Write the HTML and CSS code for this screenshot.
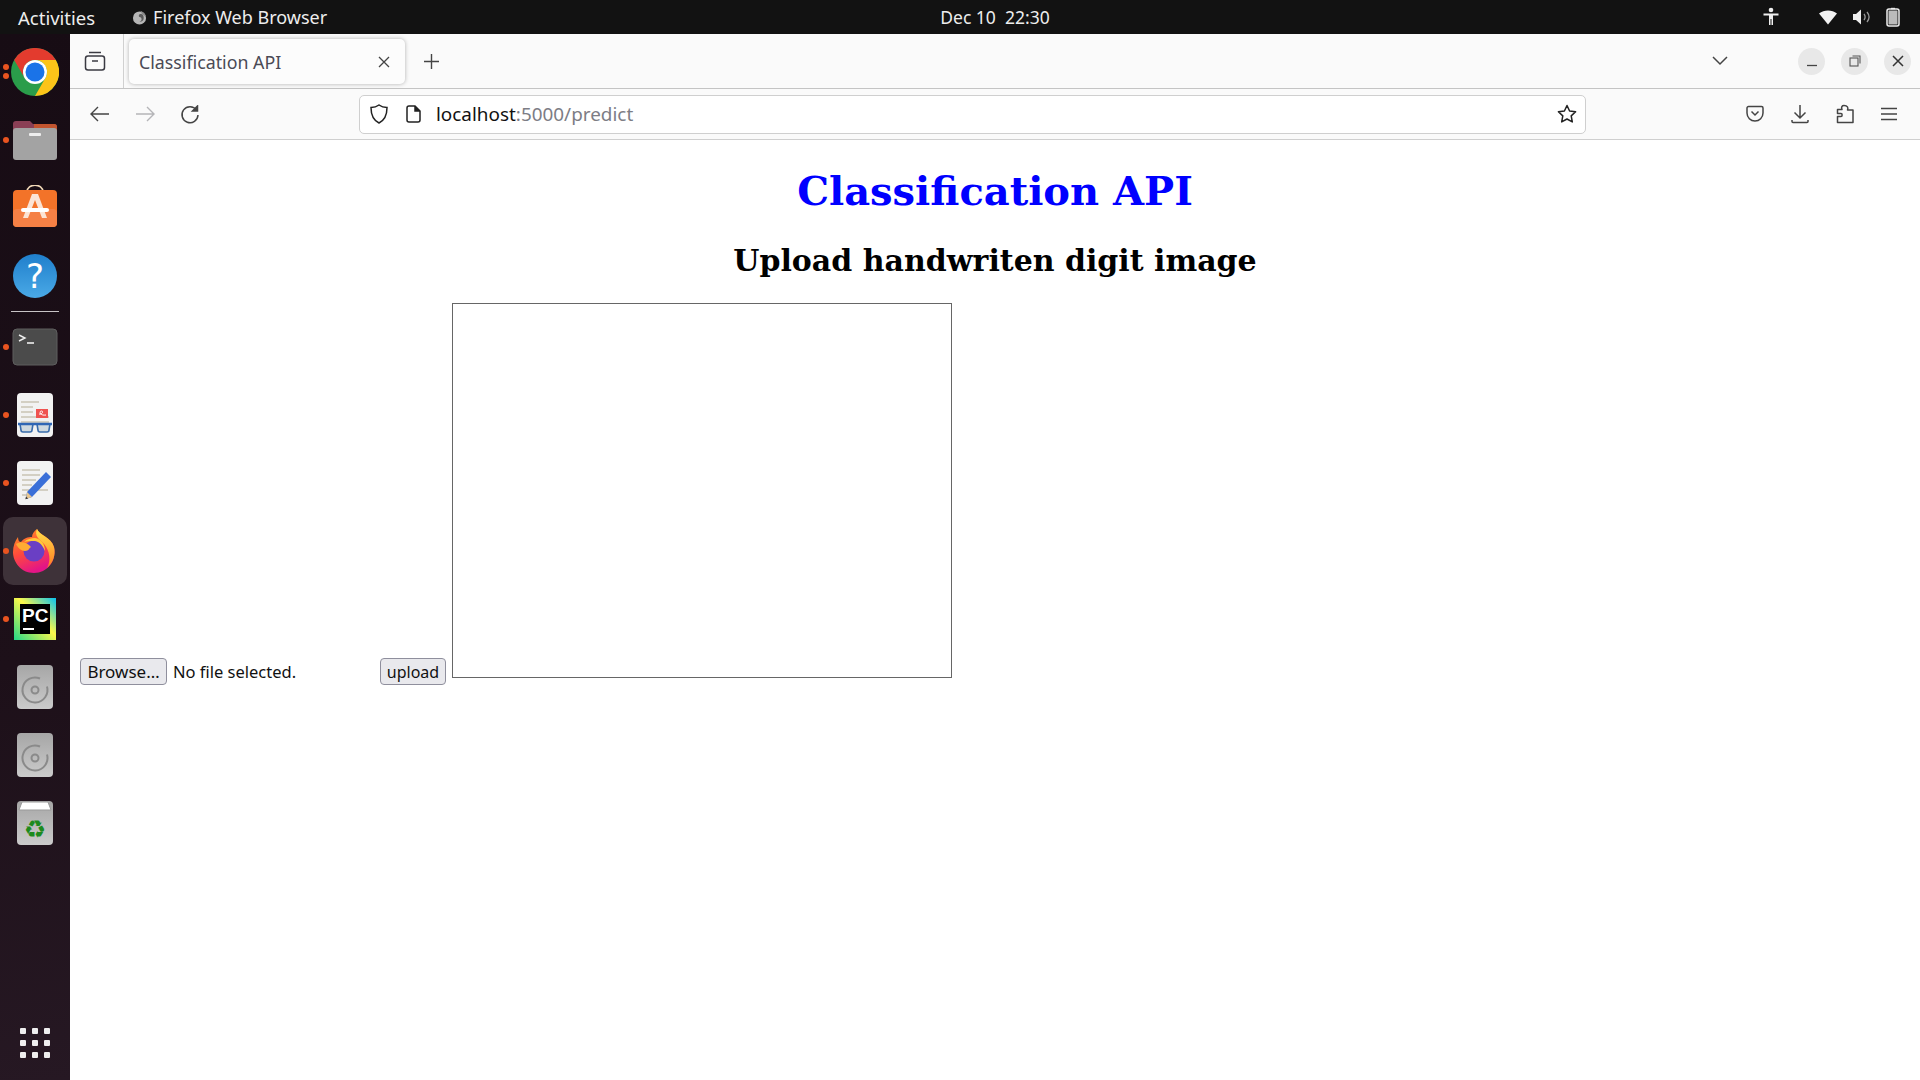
FILE: index.html

```html
<!DOCTYPE html>
<html lang="en">
<head>
  <meta charset="UTF-8">
  <title>Classification API</title>
  <link rel="stylesheet" href="styles.css">
</head>
<body>
  <!-- gnome top bar -->
  <div class="topbar">
    <span class="activities">Activities</span>
    <div class="app-menu">
      <svg width="15" height="15" viewBox="0 0 16 16"><circle cx="8" cy="8.500" r="7" fill="#b5b5b5"/><path d="M8 4.500c3-1 4.500 1 4.500 4S10 13 8 12.500C11 12 11 8 8 7.500 7 7 7 5.500 8 4.500z" fill="#5a5a5a"/><path d="M9 .8c3 1 5 3 6 6L11 5z" fill="#8a8a8a"/></svg>
      <span>Firefox Web Browser</span>
    </div>
    <span class="clock">Dec 10&nbsp;&nbsp;22:30</span>
    <div class="tray">
      <svg class="tray-a11y" width="18" height="20" viewBox="0 0 18 20"><circle cx="9" cy="3" r="2.300" fill="#eee"/><path d="M1.500 6.500h15v2H11V18H9.500v-6h-1v6H7V8.500H1.500z" fill="#eee"/></svg>
      <svg class="tray-wifi" width="20" height="16" viewBox="0 0 20 16"><path d="M1 4.500C6 .5 14 .5 19 4.500L10 15.500z" fill="#f2f2f2"/></svg>
      <svg class="tray-vol" width="20" height="18" viewBox="0 0 20 18"><path d="M1 6h3l5-4.500v15L4 12H1z" fill="#eee"/><path d="M12 6c1.500 2 1.500 4 0 6M15 4c2.500 3 2.500 7 0 10" fill="none" stroke="#999" stroke-width="1.300"/></svg>
      <svg width="14" height="20" viewBox="0 0 14 20"><path d="M5 .8h4v1.500H5z" fill="#ddd"/><rect x="1" y="2" width="12" height="17" rx="2" fill="none" stroke="#eee" stroke-width="1.500"/><rect x="2.500" y="3.500" width="9" height="14" fill="#bbb"/></svg>
    </div>
  </div>

  <div class="desktop">
    <!-- dock -->
    <nav class="dock">
      <div class="slot">
        <i class="dot dot-a"></i><i class="dot dot-b"></i>
        <svg width="48" height="48" viewBox="0 0 48 48"><circle cx="24" cy="24" r="24" fill="#2a9d4a"/><path d="M3.200 12A24 24 0 0 1 44.800 12H24A12 12 0 0 0 13.600 30z" fill="#e33b2e"/><path d="M44.800 12A24 24 0 0 1 24 48L34.400 30A12 12 0 0 0 24 12z" fill="#fcc419"/><circle cx="24" cy="24" r="12" fill="#fff"/><circle cx="24" cy="24" r="9.500" fill="#1a73e8"/></svg>
      </div>
      <div class="slot">
        <i class="dot"></i>
        <svg width="46" height="42" viewBox="0 0 46 42"><path d="M1 9V5a3 3 0 0 1 3-3h14l3 3h21a3 3 0 0 1 3 3v8H1z" fill="#8a3f55"/><path d="M22 5h20a3 3 0 0 1 3 3v8H22z" fill="#c2552f"/><rect x="1" y="9" width="44" height="32" rx="3" fill="#a3a3a3"/><rect x="17" y="14" width="12" height="3" rx="1" fill="#eee"/></svg>
      </div>
      <div class="slot">
        <svg width="46" height="46" viewBox="0 3 46 46"><path d="M15 10C15 1 31 1 31 10" fill="none" stroke="#f1d9b8" stroke-width="1.600"/><rect x="1" y="8" width="44" height="37" rx="4" fill="#f37329"/><rect x="1" y="27" width="44" height="18" rx="4" fill="#f58045"/><path d="M20 12h6l9 24h-5l-7-18-7 18h-5z" fill="#fbe4d5"/><rect x="9" y="26" width="28" height="4" rx="2" fill="#fff"/></svg>
      </div>
      <div class="slot">
        <svg width="46" height="46" viewBox="0 0 46 46"><defs><linearGradient id="helpBg" x1="0" y1="0" x2="0" y2="1"><stop offset="0" stop-color="#1f7fcc"/><stop offset="1" stop-color="#4aa9e6"/></linearGradient></defs><circle cx="23" cy="23" r="22" fill="url(#helpBg)"/><text x="23" y="35" class="help-mark">?</text></svg>
      </div>
      <hr class="dock-sep">
      <div class="slot">
        <i class="dot"></i>
        <svg width="46" height="38" viewBox="0 0 46 38"><rect x="1" y="1" width="44" height="36" rx="4" fill="#4b4b4b" stroke="#5e5e5e"/><path d="M7 7l6 3-6 3" fill="none" stroke="#eee" stroke-width="1.400"/><path d="M15 15h7" stroke="#eee" stroke-width="1.600"/></svg>
      </div>
      <div class="slot">
        <i class="dot"></i>
        <svg width="36" height="44" viewBox="0 0 36 44"><rect width="36" height="44" rx="4" fill="#f2f2f2"/><path d="M4 9h18M4 14h12M4 19h12M4 24h28M4 29h28" stroke="#c9c4b4" stroke-width="1.600"/><rect x="19" y="16" width="12" height="9" fill="#ef5350"/><path d="M22 21c3 1 5-3 2.500-3s-2 5 4.500 4" fill="none" stroke="#fff"/><path d="M3 31h13l-1 6a2 2 0 0 1-2 2H6a2 2 0 0 1-2-2zM20 31h13l-1 6a2 2 0 0 1-2 2h-7a2 2 0 0 1-2-2z" fill="#cfd9df" stroke="#3a6cab" stroke-width="1.600"/><path d="M1 31h34" stroke="#2f66b5" stroke-width="2.600"/></svg>
      </div>
      <div class="slot">
        <i class="dot"></i>
        <svg width="36" height="44" viewBox="0 0 36 44"><rect width="36" height="44" rx="4" fill="#f2f2f2"/><path d="M5 9h18M5 14h18M5 19h14M5 24h10M5 29h26M5 34h8" stroke="#c9c4b4" stroke-width="1.600"/><path d="M29 11l5 5-19 20-6 2 1-7z" fill="#3a6fd8"/><path d="M10 31l5 5-6 2z" fill="#e8c68f"/><path d="M9 35.500l-.7 2.800 2.800-.9z" fill="#333"/></svg>
      </div>
      <div class="slot slot-active">
        <i class="dot"></i>
        <svg width="44" height="44" viewBox="0 0 44 44"><defs><linearGradient id="foxBody" x1="0" y1="0" x2=".4" y2="1"><stop offset="0" stop-color="#ff9a1f"/><stop offset=".55" stop-color="#ff4a3d"/><stop offset="1" stop-color="#e31587"/></linearGradient><linearGradient id="foxTop" x1="0" y1="0" x2="0" y2="1"><stop offset="0" stop-color="#ffe14a"/><stop offset="1" stop-color="#ff7a22"/></linearGradient></defs><path d="M24 0C26 6 38 8 41 18 44 32 34 44 21 44 8 44 0 33 0 23 0 17 2 12 5 8 5 11 6 13 8 13 11 9 15 8 19 8 19 5 21 2 24 0z" fill="url(#foxBody)"/><path d="M24 0C26 6 38 8 41 18 43 26 40 34 34 39 38 32 37 22 31 15 26 10 21 7 24 0z" fill="url(#foxTop)"/><circle cx="21" cy="22" r="10.500" fill="#6a3fc4"/><path d="M22 9c6 1 10 6 10 13-2-5-5-9-10-10-5 0-8 0-11 1 3-3 7-4 11-4z" fill="#ffc93a"/><path d="M3 15c5-3 11-2 15 3-2 1-2 4-6 4-4 0-7-3-9-7z" fill="#ffab33"/></svg>
      </div>
      <div class="slot">
        <i class="dot"></i>
        <svg width="42" height="42" viewBox="0 0 42 42"><defs><linearGradient id="pcBg" x1="0" y1="1" x2="1" y2="0"><stop offset="0" stop-color="#21d789"/><stop offset=".55" stop-color="#fcf84a"/><stop offset="1" stop-color="#07c3f2"/></linearGradient></defs><rect width="42" height="42" fill="url(#pcBg)"/><rect x="6" y="6" width="30" height="30" fill="#000"/><text x="8" y="24" class="pc-mark">PC</text><rect x="9" y="30" width="11" height="2" fill="#fff"/></svg>
      </div>
      <div class="slot">
        <svg width="36" height="44" viewBox="0 0 36 44"><defs><linearGradient id="diskBg" x1="0" y1="0" x2="0" y2="1"><stop offset="0" stop-color="#a6a6a6"/><stop offset="1" stop-color="#cbcbcb"/></linearGradient></defs><rect width="36" height="44" rx="4" fill="url(#diskBg)"/><path d="M23 13.500a12.500 12.500 0 1 0 7 8" fill="none" stroke="#8a8a8a" stroke-width="2"/><circle cx="18" cy="25" r="3.500" fill="none" stroke="#8a8a8a" stroke-width="2"/></svg>
      </div>
      <div class="slot">
        <svg width="36" height="44" viewBox="0 0 36 44"><rect width="36" height="44" rx="4" fill="url(#diskBg)"/><path d="M23 13.500a12.500 12.500 0 1 0 7 8" fill="none" stroke="#8a8a8a" stroke-width="2"/><circle cx="18" cy="25" r="3.500" fill="none" stroke="#8a8a8a" stroke-width="2"/></svg>
      </div>
      <div class="slot">
        <svg width="36" height="44" viewBox="0 0 36 44"><rect width="36" height="44" rx="4" fill="url(#diskBg)"/><path d="M5 1h26l3 8H2z" fill="#fff" stroke="#999"/><text x="18" y="37" class="recycle-mark">♻</text></svg>
      </div>
      <div class="show-apps">
        <i></i><i></i><i></i><i></i><i></i><i></i><i></i><i></i><i></i>
      </div>
    </nav>

    <div class="browser">
      <div class="tabbar">
        <svg class="view-btn" width="22" height="22" viewBox="0 0 22 22" fill="none" stroke="#3a3a42" stroke-width="1.500"><path d="M5 2.500h12"/><rect x="1.500" y="6" width="19" height="14" rx="2.500"/><path d="M8 11h6"/></svg>
        <div class="tab-sep"></div>
        <div class="tab">
          <span class="tab-title">Classification API</span>
          <svg width="12" height="12" viewBox="0 0 12 12" stroke="#444" stroke-width="1.300"><path d="M1 1l10 10M11 1L1 11"/></svg>
        </div>
        <svg class="new-tab" width="15" height="15" viewBox="0 0 15 15" stroke="#444" stroke-width="1.400"><path d="M7.500 0v15M0 7.500h15"/></svg>
        <svg class="tab-list" width="16" height="10" viewBox="0 0 16 10" fill="none" stroke="#444" stroke-width="1.500"><path d="M1 1l7 7 7-7"/></svg>
        <div class="win-btn"><svg width="12" height="12" viewBox="0 0 12 12" stroke="#444" stroke-width="1.300"><path d="M1 10.500h10"/></svg></div>
        <div class="win-btn"><svg width="12" height="12" viewBox="0 0 12 12" fill="none" stroke="#555" stroke-width="1.100"><rect x="1" y="3" width="8" height="8"/><path d="M3.500 1h7.500v7.500"/></svg></div>
        <div class="win-btn"><svg width="12" height="12" viewBox="0 0 12 12" stroke="#333" stroke-width="1.500"><path d="M1 1l10 10M11 1L1 11"/></svg></div>
      </div>

      <div class="navbar">
        <svg width="20" height="16" viewBox="0 0 20 16" fill="none" stroke="#444" stroke-width="1.400"><path d="M19 8H1M8 1L1 8l7 7"/></svg>
        <svg width="20" height="16" viewBox="0 0 20 16" fill="none" stroke="#b5b5b8" stroke-width="1.400"><path d="M1 8h18M12 1l7 7-7 7"/></svg>
        <svg class="reload" width="20" height="20" viewBox="0 0 20 20" fill="none" stroke="#444" stroke-width="1.500"><path d="M16.500 5A8 8 0 1 0 18 10"/><path d="M17.500 1v5h-5z" fill="#444"/></svg>
        <div class="urlbar">
          <svg width="18" height="20" viewBox="0 0 18 20" fill="none" stroke="#222" stroke-width="1.500"><path d="M9 1c2 1.500 5 2.500 8 2.500 0 8-2 12.500-8 15.500C3 16 1 11.500 1 3.500 4 3.500 7 2.500 9 1z"/></svg>
          <svg class="page-icon" width="15" height="18" viewBox="0 0 15 18" fill="none" stroke="#222" stroke-width="1.500"><path d="M3 1h6l5 5v9a2 2 0 0 1-2 2H3a2 2 0 0 1-2-2V3a2 2 0 0 1 2-2z"/><path d="M9 1v5h5" fill="#222"/></svg>
          <span class="url"><b>localhost</b>:5000/predict</span>
          <svg width="20" height="20" viewBox="0 0 20 20" fill="none" stroke="#222" stroke-width="1.500"><path d="M10 1.500l2.600 5.500 6 .8-4.400 4.100 1.100 6L10 15l-5.300 2.900 1.100-6L1.400 7.800l6-.8z" stroke-linejoin="round"/></svg>
        </div>
        <div class="nav-tools">
          <svg width="18" height="18" viewBox="0 0 18 18" fill="none" stroke="#444" stroke-width="1.500"><path d="M2.500 1.500h13a1.500 1.500 0 0 1 1.500 1.500v5a8 8 0 0 1-16 0V3a1.500 1.500 0 0 1 1.500-1.500z"/><path d="M5.500 6.500L9 10l3.500-3.500"/></svg>
          <svg width="18" height="20" viewBox="0 0 18 20" fill="none" stroke="#444" stroke-width="1.500"><path d="M9 1v13M3.500 8.500L9 14l5.500-5.500M1 16v1.500a1 1 0 0 0 1 1h14a1 1 0 0 0 1-1V16"/></svg>
          <svg width="18" height="20" viewBox="0 0 18 20" fill="none" stroke="#444" stroke-width="1.500"><path d="M8 1.500c-2 0-3 1.500-2 4H1.500v4H5c1.500 0 1.500 3 0 3H1.500v6H17V6h-5.500c1-2.500 0-4.500-3.500-4.500z" stroke-linejoin="round"/></svg>
          <svg width="16" height="14" viewBox="0 0 16 14" stroke="#444" stroke-width="1.500"><path d="M0 1.500h16M0 7h16M0 12.500h16"/></svg>
        </div>
      </div>

      <main class="page">
        <h1>Classification API</h1>
        <h2>Upload handwriten digit image</h2>
        <form class="upload-form">
          <button type="button" class="form-btn browse-btn">Browse…</button>
          <span class="file-name">No file selected.</span>
          <button type="button" class="form-btn upload-btn">upload</button>
          <div class="preview"></div>
        </form>
      </main>
    </div>
  </div>
</body>
</html>
```

FILE: styles.css

```css
* { box-sizing: border-box; }
html, body { height: 100%; }
body {
  margin: 0;
  font-family: "Noto Sans", Roboto, sans-serif;
  background: #fff;
  overflow: hidden;
}
svg { display: block; flex: none; }

/* top bar */
.topbar {
  height: 34px;
  background: #121212;
  color: #ededed;
  font-size: 18px;
  display: flex;
  align-items: center;
  padding-left: 18px;
  position: relative;
}
.activities { font-size: 18.500px; }
.app-menu {
  display: flex;
  align-items: center;
  gap: 6px;
  margin-left: 37px;
}
.clock {
  position: absolute;
  left: 0;
  right: 0;
  padding-left: 70px;
  text-align: center;
  font-size: 17.500px;
}
.tray {
  margin-left: auto;
  display: flex;
  align-items: center;
  gap: 14px;
  padding-right: 20px;
}
.tray-a11y { margin-right: 24px; }

.desktop {
  display: flex;
  height: 1046px;
}

/* dock */
.dock {
  width: 70px;
  background: linear-gradient(170deg, #170c14, #1d1019 60%, #261823);
  padding-top: 4px;
  display: flex;
  flex-direction: column;
  align-items: center;
  flex: none;
}
.slot {
  width: 64px;
  height: 68px;
  flex: none;
  border-radius: 10px;
  display: flex;
  align-items: center;
  justify-content: center;
  position: relative;
}
.slot-active { background: #3e3239; }
.dock-sep {
  width: 48px;
  height: 1px;
  margin: 1px 0;
  border: 0;
  background: #c8c4c6;
}
.dot {
  position: absolute;
  left: 0;
  top: 31px;
  width: 6px;
  height: 6px;
  border-radius: 50%;
  background: #e95420;
}
.dot-a { top: 26px; }
.dot-b { top: 35px; }
.help-mark {
  font: 34px "DejaVu Sans", sans-serif;
  fill: #fff;
  text-anchor: middle;
}
.pc-mark {
  font: bold 19px "Liberation Sans", sans-serif;
  fill: #fff;
}
.recycle-mark {
  font: 25px "DejaVu Sans", sans-serif;
  fill: #1d8a1d;
  text-anchor: middle;
}
.show-apps {
  margin-top: auto;
  margin-bottom: 22px;
  display: grid;
  grid-template-columns: repeat(3, 6px);
  gap: 6px;
}
.show-apps i {
  width: 6px;
  height: 6px;
  border-radius: 1px;
  background: #eee;
}

/* browser chrome */
.browser {
  flex: 1;
  display: flex;
  flex-direction: column;
  min-width: 0;
}
.tabbar {
  height: 55px;
  background: #fafafa;
  border-bottom: 1px solid #c4c4c4;
  display: flex;
  align-items: center;
  padding-left: 14px;
  flex: none;
}
.tab-sep {
  width: 1px;
  height: 54px;
  background: #d0d0d0;
  margin-left: 17px;
}
.tab {
  width: 276px;
  height: 45px;
  margin-top: 1px;
  margin-left: 5px;
  padding: 0 15px 0 10px;
  background: #fcfcfc;
  border-radius: 5px;
  box-shadow: 0 0 4px rgba(0,0,0,0.3);
  display: flex;
  align-items: center;
  justify-content: space-between;
}
.tab-title {
  font-size: 17.800px;
  color: #4a4a55;
}
.new-tab { margin-left: 19px; }
.tab-list { margin-left: auto; margin-right: 70px; }
.win-btn {
  width: 27px;
  height: 27px;
  border-radius: 50%;
  background: #e8e8e8;
  margin-right: 16px;
  display: flex;
  align-items: center;
  justify-content: center;
}
.win-btn:last-child { margin-right: 9px; }

.navbar {
  height: 51px;
  background: #fafafa;
  border-bottom: 1px solid #cfcfcf;
  display: flex;
  align-items: center;
  gap: 25px;
  padding-left: 20px;
  flex: none;
}
.reload { margin-top: 2px; }
.urlbar {
  width: 1227px;
  height: 39px;
  margin-left: 134px;
  background: #fff;
  border: 1px solid #cfcfcf;
  border-radius: 5px;
  display: flex;
  align-items: center;
  padding: 0 8px 0 10px;
}
.page-icon { margin-left: 18px; }
.url {
  margin-left: 15px;
  flex: 1;
  font-size: 18.900px;
  color: #7d7d85;
}
.url b {
  font-weight: 400;
  color: #111;
}
.nav-tools {
  display: flex;
  align-items: center;
  gap: 27px;
  margin-left: 135px;
}

/* page content */
.page {
  flex: 1;
  padding: 0 10px;
  font-family: "DejaVu Serif", serif;
}
.page h1 {
  margin: 27px 0 0;
  text-align: center;
  font-size: 40px;
  line-height: 47px;
  color: #0000ff;
}
.page h2 {
  margin: 29px 0 0;
  text-align: center;
  font-size: 30px;
  line-height: 36px;
  color: #000;
}
.upload-form {
  margin-top: 24px;
  display: flex;
  align-items: flex-end;
}
.form-btn {
  height: 27px;
  padding: 0;
  font: 16.500px "Noto Sans", sans-serif;
  color: #111;
  background: #e9e9ed;
  border: 1px solid #8f8f9d;
  border-radius: 4px;
  flex: none;
}
.browse-btn { width: 87px; font-size: 17px; }
.upload-btn { width: 66px; font-size: 16px; }
.file-name {
  width: 213px;
  padding-left: 6px;
  font: 16.500px/27px "Noto Sans", sans-serif;
  color: #111;
}
.preview {
  width: 500px;
  height: 375px;
  margin-left: 6px;
  margin-bottom: 7px;
  border: 1px solid #666;
}
```
